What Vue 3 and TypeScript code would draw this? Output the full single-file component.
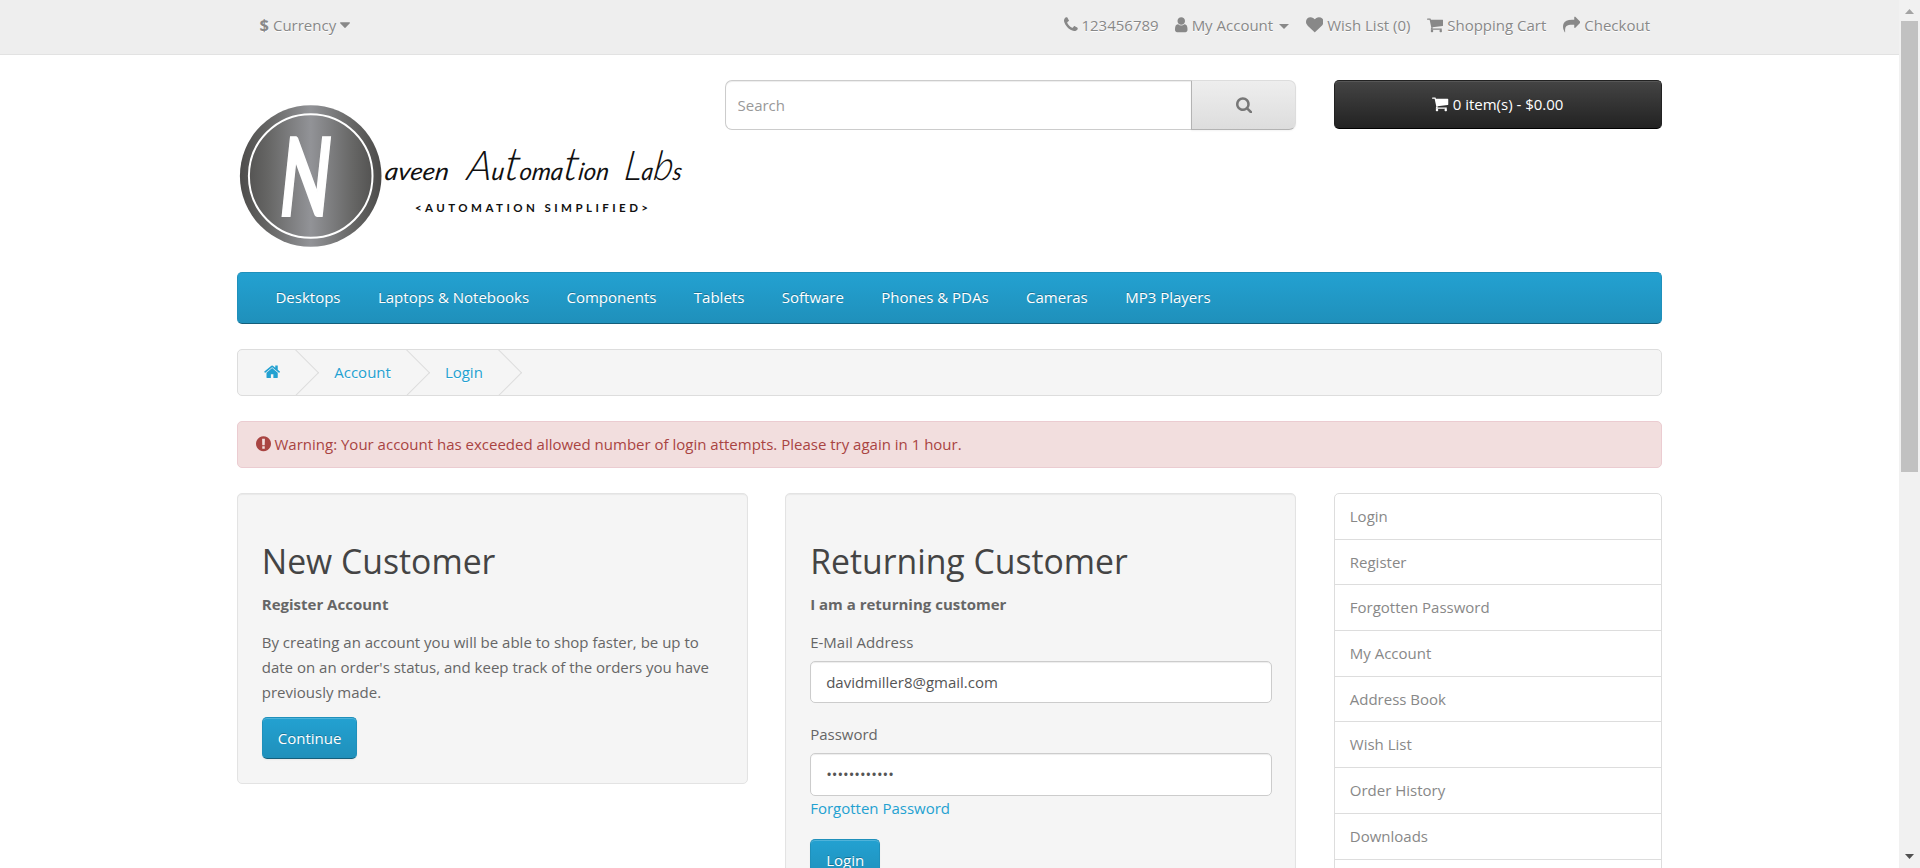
<script setup lang="ts">
import { h, ref, type FunctionalComponent } from 'vue'

interface Glyph {
  x: number
  width: number
  d: string
}

const glyphs: Record<string, Glyph> = {
  phone: {
    x: 192,
    width: 1408,
    d: 'M1600 1240q0 27-10 70.5t-21 68.5q-21 50-122 106-94 51-186 51-27 0-53-3.5t-57.5-12.5-47-14.5-55.5-20.5-49-18q-98-35-175-83-127-79-264-216t-216-264q-48-77-83-175-3-9-18-49t-20.5-55.5-14.5-47-12.5-57.5-3.5-53q0-92 51-186 56-101 106-122 25-11 68.5-21t70.5-10q14 0 21 3 18 6 53 76 11 19 30 54t35 63.5 31 53.5q3 4 17.5 25t21.5 35.5 7 28.5q0 20-28.5 50t-62 55-62 53-28.5 46q0 9 5 22.5t8.5 20.5 14 24 11.5 19q76 137 174 235t235 174q2 1 19 11.5t24 14 20.5 8.5 22.5 5q18 0 46-28.5t53-62 55-62 50-28.5q14 0 28.5 7t35.5 21.5 25 17.5q25 15 53.5 31t63.5 35 54 30q70 35 76 53 3 7 3 21z',
  },
  user: {
    x: 256,
    width: 1280,
    d: 'M1536 1399q0 109-62.5 187t-150.5 78h-854q-88 0-150.5-78t-62.5-187q0-85 8.5-160.5t31.5-152 58.5-131 94-89 134.5-34.5q131 128 313 128t313-128q76 0 134.5 34.5t94 89 58.5 131 31.5 152 8.5 160.5zm-256-887q0 159-112.5 271.5t-271.5 112.5-271.5-112.5-112.5-271.5 112.5-271.5 271.5-112.5 271.5 112.5 112.5 271.5z',
  },
  heart: {
    x: 0,
    width: 1792,
    d: 'M896 1664q-26 0-44-18l-624-602q-10-8-27.5-26t-55.5-65.5-68-97.5-53.5-121-23.5-138q0-220 127-344t351-124q62 0 126.5 21.5t120 58 95.5 68.5 76 68q36-36 76-68t95.5-68.5 120-58 126.5-21.5q224 0 351 124t127 344q0 221-229 450l-623 600q-18 18-44 18z',
  },
  cart: {
    x: 64,
    width: 1664,
    d: 'M704 1536q0 52-38 90t-90 38-90-38-38-90 38-90 90-38 90 38 38 90zm896 0q0 52-38 90t-90 38-90-38-38-90 38-90 90-38 90 38 38 90zm128-1088v512q0 24-16.5 42.5t-40.5 21.5l-1044 122q13 60 13 70 0 16-24 64h920q26 0 45 19t19 45-19 45-45 19h-1024q-26 0-45-19t-19-45q0-11 8-31.5t16-36 21.5-40 15.5-29.5l-177-823h-204q-26 0-45-19t-19-45 19-45 45-19h256q16 0 28.5 6.5t19.5 15.5 13 24.5 8 26 5.5 29.5 4.5 26h1201q26 0 45 19t19 45z',
  },
  share: {
    x: 0,
    width: 1792,
    d: 'M1792 640q0 26-19 45l-512 512q-19 19-45 19t-45-19-19-45v-256h-224q-98 0-175.5 6t-154 21.5-133 42.5-105.5 69.5-80 101-48.5 138.5-17.5 181q0 55 5 123 0 6 2.5 23.5t2.5 26.5q0 15-8.5 25t-23.5 10q-16 0-28-17-7-9-13-22t-13.5-30-10.5-24q-127-285-127-451 0-199 53-333 162-403 875-403h224v-256q0-26 19-45t45-19 45 19l512 512q19 19 19 45z',
  },
  search: {
    x: 64,
    width: 1664,
    d: 'M1216 832q0-185-131.5-316.5t-316.5-131.5-316.5 131.5-131.5 316.5 131.5 316.5 316.5 131.5 316.5-131.5 131.5-316.5zm512 832q0 52-38 90t-90 38q-54 0-90-38l-343-342q-179 124-399 124-143 0-273.5-55.5t-225-150-150-225-55.5-273.5 55.5-273.5 150-225 225-150 273.5-55.5 273.5 55.5 225 150 150 225 55.5 273.5q0 220-124 399l343 343q37 37 37 90z',
  },
  home: {
    x: 64,
    width: 1664,
    d: 'M1472 992v480q0 26-19 45t-45 19h-384v-384h-256v384h-384q-26 0-45-19t-19-45v-480q0-1 .5-3t.5-3l575-474 575 474q1 2 1 6zm223-69l-62 74q-8 9-21 11h-3q-13 0-21-7l-692-577-692 577q-12 8-24 7-13-2-21-11l-62-74q-8-10-7-23.5t11-21.5l719-599q32-26 76-26t76 26l244 204v-195q0-14 9-23t23-9h192q14 0 23 9t9 23v408l219 182q10 8 11 21.5t-7 23.5z',
  },
  alert: {
    x: 128,
    width: 1536,
    d: 'M896 128q209 0 385.5 103t279.5 279.5 103 385.5-103 385.5-279.5 279.5-385.5 103-385.5-103-279.5-279.5-103-385.5 103-385.5 279.5-279.5 385.5-103zm128 1247v-190q0-14-9-23.5t-22-9.5h-192q-13 0-23 10t-10 23v188q0 13 10 23t23 10h192q13 0 22-9.5t9-23.5zm-2-344l18-621q0-12-10-18-10-8-24-8h-220q-14 0-24 8-10 6-10 18l17 621q0 10 10 17.5t24 7.5h185q14 0 23.5-7.5t10.5-17.5z',
  },
  caret: {
    x: 384,
    width: 1024,
    d: 'M1408 704q0 26-19 45l-448 448q-19 19-45 19t-45-19l-448-448q-19-19-19-45t19-45 45-19h896q26 0 45 19t19 45z',
  },
}

const Icon: FunctionalComponent<{ name: string; size?: number }> = (props) => {
  const glyph = glyphs[props.name]
  const size = props.size ?? 17.5
  return h(
    'svg',
    {
      class: 'icon',
      width: (glyph.width / 1792) * size,
      height: size,
      viewBox: `${glyph.x} 0 ${glyph.width} 1792`,
      'aria-hidden': 'true',
    },
    [h('path', { d: glyph.d, fill: 'currentColor' })],
  )
}
Icon.props = ['name', 'size']

const topLinks = [
  { icon: 'phone', label: '123456789', caret: false },
  { icon: 'user', label: 'My Account', caret: true },
  { icon: 'heart', label: 'Wish List (0)', caret: false },
  { icon: 'cart', label: 'Shopping Cart', caret: false },
  { icon: 'share', label: 'Checkout', caret: false },
]

const categories = [
  'Desktops',
  'Laptops & Notebooks',
  'Components',
  'Tablets',
  'Software',
  'Phones & PDAs',
  'Cameras',
  'MP3 Players',
]

const accountLinks = [
  'Login',
  'Register',
  'Forgotten Password',
  'My Account',
  'Address Book',
  'Wish List',
  'Order History',
  'Downloads',
  '',
]

const query = ref('')
const email = ref('davidmiller8@gmail.com')
const password = ref('secret-12345')
</script>

<template>
  <div class="window">
    <div class="page">
      <nav class="top">
        <div class="container top-row">
          <button class="currency" type="button">
            <strong>$</strong><span>Currency</span><Icon name="caret" />
          </button>
          <ul class="top-links">
            <li v-for="link in topLinks" :key="link.label">
              <a><Icon :name="link.icon" /><span>{{ link.label }}</span><i v-if="link.caret" class="caret"></i></a>
            </li>
          </ul>
        </div>
      </nav>

      <header class="container header">
        <svg class="logo" width="450" height="192" viewBox="0 0 450 192">
          <defs>
            <linearGradient id="disc" x1="0" x2="1" y1="0" y2="0">
              <stop offset="0" stop-color="#4d4c4b" />
              <stop offset="0.2" stop-color="#666665" />
              <stop offset="0.5" stop-color="#929397" />
              <stop offset="0.8" stop-color="#666665" />
              <stop offset="1" stop-color="#4b4a49" />
            </linearGradient>
          </defs>
          <circle cx="73.7" cy="96" r="70.8" fill="url(#disc)" />
          <circle cx="73.7" cy="96" r="61.8" fill="none" stroke="#fff" stroke-width="2" />
          <text class="initial" transform="translate(40 136) skewX(-6) scale(.6 1)">N</text>
          <g class="script">
            <text transform="translate(147 100) skewX(-8)" textLength="64" lengthAdjust="spacingAndGlyphs">aveen</text>
            <text transform="translate(229 100) skewX(-8)" textLength="142" lengthAdjust="spacingAndGlyphs"><tspan class="cap">A</tspan>u<tspan class="tall">t</tspan>oma<tspan class="tall">t</tspan>ion</text>
            <text transform="translate(386 100) skewX(-8)" textLength="58" lengthAdjust="spacingAndGlyphs"><tspan class="cap">L</tspan>a<tspan class="cap">b</tspan>s</text>
          </g>
          <text class="tagline" x="178" y="132" textLength="233">&lt;AUTOMATION SIMPLIFIED&gt;</text>
        </svg>
        <form class="search" @submit.prevent>
          <input v-model="query" type="text" placeholder="Search" />
          <button type="button" aria-label="Search"><Icon name="search" /></button>
        </form>
        <button class="cart" type="button"><Icon name="cart" /><span>0 item(s) - $0.00</span></button>
      </header>

      <div class="container">
        <nav class="menu">
          <a v-for="category in categories" :key="category">{{ category }}</a>
        </nav>

        <ul class="breadcrumb">
          <li><a><Icon name="home" /></a></li>
          <li><a>Account</a></li>
          <li><a>Login</a></li>
        </ul>

        <div class="warning">
          <Icon name="alert" /><span>Warning: Your account has exceeded allowed number of login attempts. Please try again in 1 hour.</span>
        </div>

        <div class="columns">
          <section class="well">
            <h2>New Customer</h2>
            <p><strong>Register Account</strong></p>
            <p>By creating an account you will be able to shop faster, be up to date on an order's status, and keep track of the orders you have previously made.</p>
            <a class="primary">Continue</a>
          </section>

          <section class="well">
            <h2>Returning Customer</h2>
            <p><strong>I am a returning customer</strong></p>
            <div class="field">
              <label for="email">E-Mail Address</label>
              <input id="email" v-model="email" type="text" />
            </div>
            <div class="field">
              <label for="password">Password</label>
              <input id="password" v-model="password" type="password" />
              <a>Forgotten Password</a>
            </div>
            <a class="primary">Login</a>
          </section>

          <aside class="account">
            <a v-for="link in accountLinks" :key="link">{{ link }}</a>
          </aside>
        </div>
      </div>
    </div>

    <div class="scrollbar">
      <svg width="21" height="21" viewBox="0 0 21 21"><path d="M6 14h9l-4.5-5z" fill="#a3a3a3" /></svg>
      <div class="thumb"></div>
      <svg class="down" width="21" height="21" viewBox="0 0 21 21"><path d="M6 7h9l-4.5 5z" fill="#505050" /></svg>
    </div>
  </div>
</template>

<style>
body {
  margin: 0;
  background: #fff;
}
</style>

<style scoped>
* {
  box-sizing: border-box;
}
.window {
  display: flex;
  height: 868px;
  overflow: hidden;
  background: #fff;
  color: #666;
  font: 400 15px/25px 'Open Sans', sans-serif;
}
.page {
  flex: 1;
  overflow: hidden;
}
.container {
  width: 1425px;
  margin: 0 auto;
}
.icon {
  vertical-align: -2.5px;
}
button,
input {
  font: inherit;
}
ul {
  margin: 0;
  padding: 0;
  list-style: none;
}
a {
  color: #23a1d1;
  text-decoration: none;
}

.top {
  height: 55px;
  border-bottom: 1px solid #e2e2e2;
  background: #eee;
}
.top-row {
  display: flex;
  align-items: flex-start;
  justify-content: space-between;
  padding-top: 13px;
}
.currency {
  height: 25px;
  margin-left: 22.5px;
  padding: 0;
  border: 0;
  background: none;
  color: #888;
  line-height: 25px;
  text-shadow: 0 1px 0 #fff;
}
.currency strong {
  margin-right: 4px;
  font-size: 16.5px;
  line-height: 1;
}
.currency .icon {
  margin-left: 4px;
}
.top-links {
  display: flex;
  gap: 16.7px;
  padding-right: 12px;
}
.top-links a {
  display: block;
  height: 25px;
  color: #888;
  text-shadow: 0 1px 0 #fff;
}
.top-links .icon {
  margin-right: 3.8px;
}
.caret {
  display: inline-block;
  margin-left: 6px;
  vertical-align: middle;
  border-top: 5px solid;
  border-right: 5px solid transparent;
  border-left: 5px solid transparent;
}

.header {
  display: flex;
  align-items: flex-start;
  gap: 37.5px;
  padding-top: 25px;
}
.logo {
  flex: none;
  display: block;
}
.initial {
  fill: #fff;
  stroke: #fff;
  stroke-width: 2px;
  font: 700 109px Lato, sans-serif;
}
.script {
  fill: #111;
  font: italic 400 24px Lato, sans-serif;
}
.script .cap {
  font-size: 41px;
  font-weight: 300;
}
.script .tall {
  font-size: 46px;
  font-weight: 300;
}
.tagline {
  fill: #111;
  font: 700 11.5px Lato, sans-serif;
}
.search {
  display: flex;
  width: 571.9px;
  height: 50px;
}
.search input {
  flex: 1;
  min-width: 0;
  padding: 0 12px;
  border: 1px solid #ccc;
  border-right: 0;
  border-radius: 7px 0 0 7px;
  outline: 0;
  color: #555;
  box-shadow: inset 0 1px 1px rgba(0, 0, 0, 0.075);
}
.search input::placeholder {
  color: #999;
}
.search button {
  width: 105px;
  border: 1px solid;
  border-color: #ddd #ddd #b3b3b3 #b3b3b3;
  border-radius: 0 7px 7px 0;
  background: linear-gradient(#eee, #ddd);
  color: #777;
  box-shadow: 0 1px 2px rgba(0, 0, 0, 0.05);
}
.cart {
  flex: 1;
  height: 49px;
  border: 1px solid;
  border-color: #222 #222 #000;
  border-radius: 5px;
  background: linear-gradient(#444, #222);
  color: #fff;
  box-shadow: inset 0 1px 0 rgba(255, 255, 255, 0.1);
}
.cart .icon {
  margin-right: 4px;
}

.menu {
  display: flex;
  height: 52px;
  margin-bottom: 25px;
  padding: 12px 0 0 18.75px;
  border: 1px solid;
  border-color: #1f90bb #1f90bb #145e7a;
  border-radius: 5px;
  background: linear-gradient(#23a1d1, #1f90bb);
}
.menu a {
  padding: 0 18.72px;
  color: #fff;
  text-shadow: 0 -1px 0 rgba(0, 0, 0, 0.25);
}

.breadcrumb {
  display: flex;
  gap: 4px;
  height: 47px;
  margin-bottom: 25px;
  padding: 10px 0 10px 1px;
  overflow: hidden;
  border: 1px solid #ddd;
  border-radius: 5px;
  background: #f5f5f5;
}
.breadcrumb li {
  position: relative;
  padding: 0 25px;
  text-shadow: 0 1px 0 #fff;
}
.breadcrumb li::after {
  content: '';
  position: absolute;
  top: -3.75px;
  right: -6.25px;
  width: 32.5px;
  height: 32.5px;
  border-right: 1px solid #ddd;
  border-bottom: 1px solid #ddd;
  transform: rotate(-45deg);
}

.warning {
  height: 47px;
  margin-bottom: 25px;
  padding: 10px 17.5px;
  border: 1px solid #ebccd1;
  border-radius: 5px;
  background: #f2dede;
  color: #a94442;
}
.warning .icon {
  margin-right: 4px;
}

.columns {
  display: grid;
  grid-template-columns: 510.9px 510.9px 1fr;
  gap: 37.5px;
  align-items: start;
}
.well {
  padding: 23.75px;
  border: 1px solid #e3e3e3;
  border-radius: 5px;
  background: #f5f5f5;
  box-shadow: inset 0 1px 1px rgba(0, 0, 0, 0.05);
}
h2 {
  margin: 25px 0 12.5px;
  color: #444;
  font-size: 33.75px;
  font-weight: 400;
  line-height: 37px;
}
p {
  margin: 0 0 12.5px;
}
.primary {
  display: inline-block;
  padding: 9.375px 15px;
  border: 1px solid;
  border-color: #1f90bb #1f90bb #145e7a;
  border-radius: 5px;
  background: linear-gradient(#23a1d1, #1f90bb);
  color: #fff;
  line-height: 21.43px;
  text-shadow: 0 -1px 0 rgba(0, 0, 0, 0.25);
  vertical-align: top;
  box-shadow: inset 0 1px 0 rgba(255, 255, 255, 0.2), 0 1px 2px rgba(0, 0, 0, 0.05);
}
.field {
  margin-bottom: 18.75px;
}
.field label {
  display: block;
  margin-bottom: 6px;
}
.field input {
  display: block;
  width: 100%;
  height: 42.5px;
  padding: 0 15px;
  border: 1px solid #ccc;
  border-radius: 5px;
  outline: 0;
  background: #fff;
  color: #555;
  box-shadow: inset 0 1px 1px rgba(0, 0, 0, 0.075);
}
.account {
  display: flex;
  flex-direction: column;
  border: 1px solid #ddd;
  border-radius: 5px 5px 0 0;
}
.account a {
  height: 45.7px;
  padding: 10px 15px;
  border-top: 1px solid #ddd;
  color: #888;
}
.account a:first-child {
  height: 44.7px;
  border-top: 0;
}

.scrollbar {
  display: flex;
  flex-direction: column;
  width: 21px;
  background: #f1f1f1;
}
.thumb {
  width: 17px;
  height: 451px;
  margin: 0 2px;
  background: #c1c1c1;
}
.down {
  margin-top: auto;
}
</style>
